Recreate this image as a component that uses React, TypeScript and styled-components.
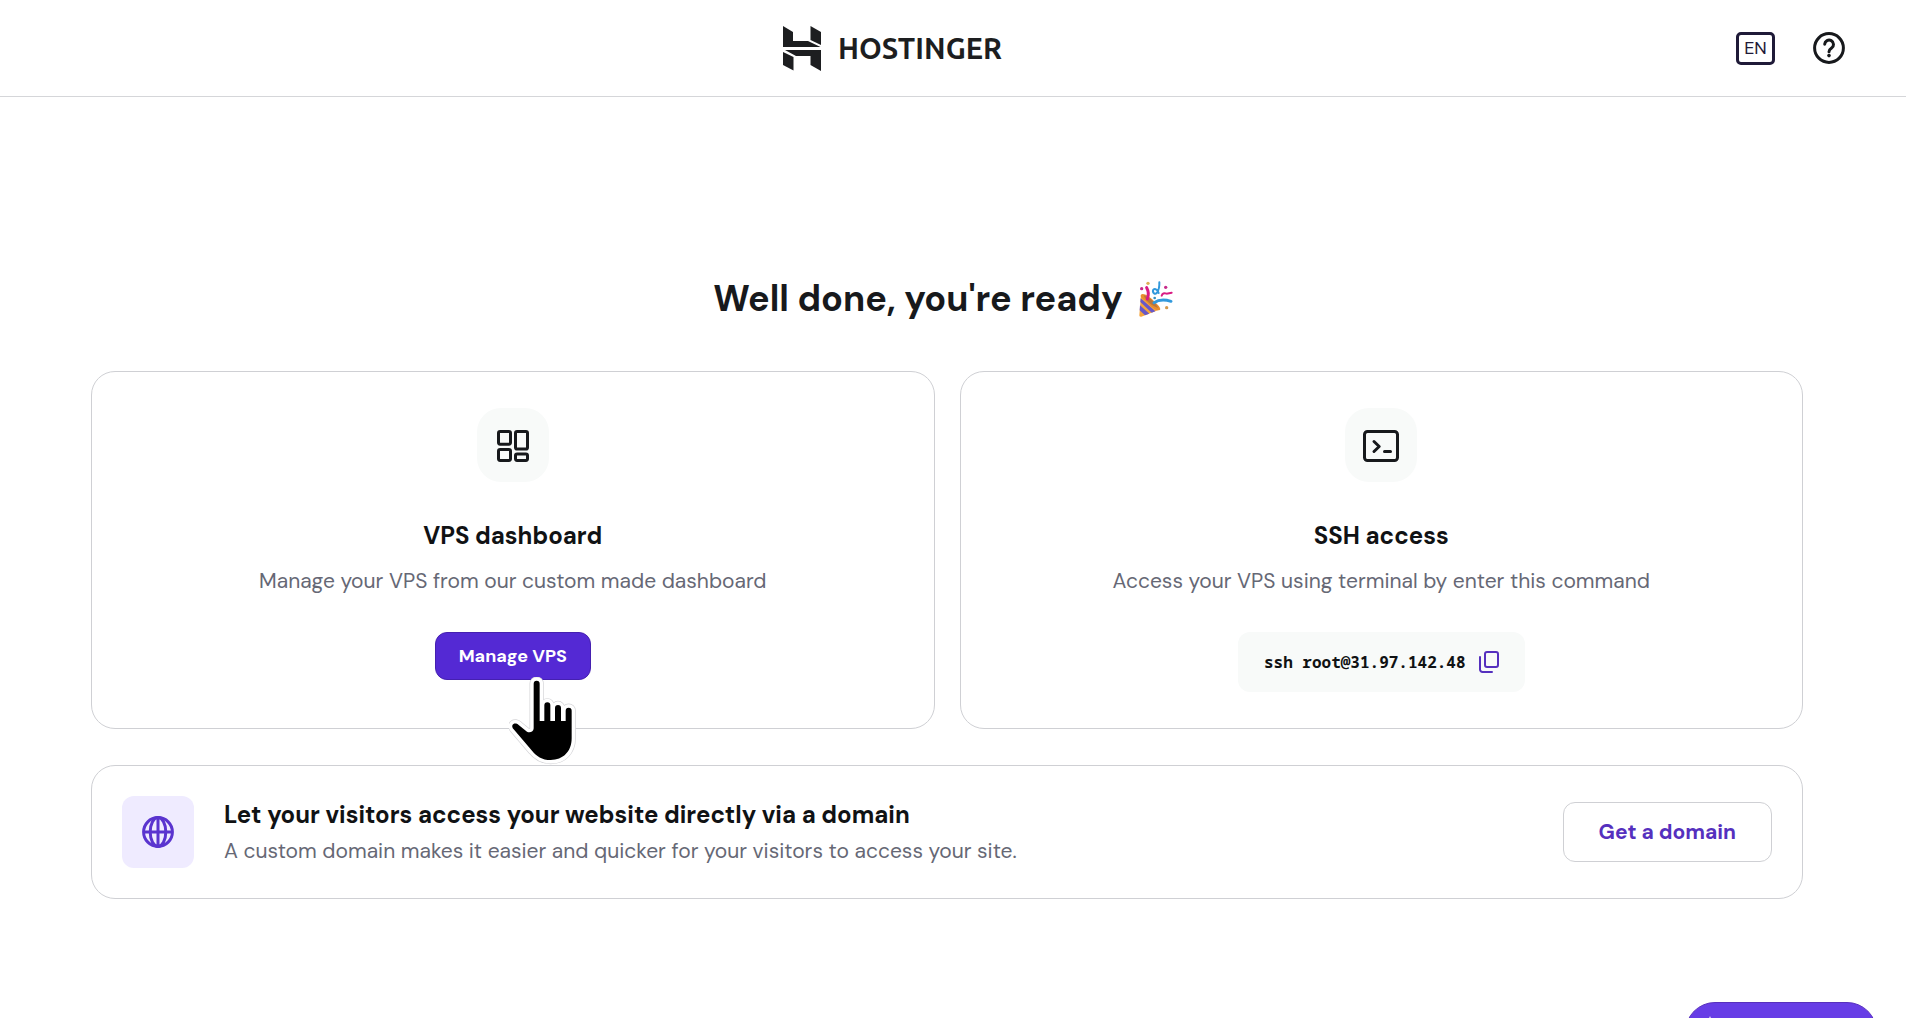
import React from "react";
import styled, { createGlobalStyle } from "styled-components";

const GlobalStyle = createGlobalStyle`
  *, *::before, *::after { box-sizing: border-box; }
  body {
    margin: 0;
    background: #ffffff;
    color: #17191c;
    font-family: "DM Sans", Inter, "Liberation Sans", sans-serif;
  }
  h1, h2, p { margin: 0; }
  button { font-family: inherit; cursor: pointer; }
  svg { display: block; flex: none; }
`;

const Header = styled.header`
  display: flex;
  align-items: center;
  justify-content: space-between;
  height: 97px;
  padding: 0 61px 0 48px;
  border-bottom: 1px solid #d5d6d9;
`;

const HeaderStart = styled.div`
  width: 0;
`;

const Brand = styled.a`
  display: flex;
  align-items: center;
  gap: 16px;
  color: #1d1e20;
  text-decoration: none;
`;

const Wordmark = styled.span`
  font-family: Ubuntu, "Noto Sans", sans-serif;
  font-size: 29px;
  line-height: 32px;
  font-weight: 700;
`;

const HeaderActions = styled.div`
  display: flex;
  align-items: center;
  gap: 38px;
`;

const LanguageButton = styled.button`
  width: 39px;
  height: 33px;
  padding: 0;
  border: 3px solid #1f1a38;
  border-radius: 5px;
  background: transparent;
  color: #1f1a38;
  font-size: 18px;
  line-height: 20px;
`;

const IconButton = styled.button`
  display: flex;
  padding: 0;
  border: 0;
  background: transparent;
  color: ${(p) => p.color || "#17191c"};
`;

const Main = styled.main`
  display: flex;
  flex-direction: column;
  gap: 36px;
  padding: 180px 103px 80px 91px;
`;

const Heading = styled.h1`
  display: flex;
  align-items: center;
  justify-content: center;
  gap: 16px;
  padding: 0 8px 14px 0;
  font-size: 36px;
  line-height: 44px;
  font-weight: 700;
`;

const Cards = styled.div`
  display: grid;
  grid-template-columns: 1fr 1fr;
  gap: 25px;
`;

const Card = styled.section`
  display: flex;
  flex-direction: column;
  align-items: center;
  padding: 36px 24px;
  border: 1px solid #cfd0d4;
  border-radius: 24px;
`;

const CardIcon = styled.div`
  display: grid;
  place-items: center;
  width: 72px;
  height: 74px;
  padding-top: 2px;
  margin-bottom: 38px;
  border-radius: 24px;
  background: #f8faf9;
`;

const Title = styled.h2`
  font-size: 24px;
  line-height: 32px;
  font-weight: 700;
  color: #101214;
`;

const Description = styled.p`
  font-size: 21px;
  line-height: 28px;
  color: #666875;
`;

const CardDescription = styled(Description)`
  margin: 15px 0 37px;
  text-align: center;
`;

const PrimaryWrap = styled.div`
  position: relative;
`;

const PrimaryButton = styled.button`
  height: 48px;
  padding: 0 23px;
  border: 1px solid #4520b0;
  border-radius: 12px;
  background: #5429d4;
  color: #ffffff;
  font-size: 18px;
  line-height: 24px;
  font-weight: 700;
`;

const Pointer = styled.svg`
  position: absolute;
  left: 74px;
  top: 45px;
  pointer-events: none;
`;

const Command = styled.div`
  display: flex;
  align-items: center;
  gap: 13px;
  height: 60px;
  padding: 0 26px;
  border-radius: 12px;
  background: #f8faf9;
`;

const Code = styled.code`
  font-family: "Noto Sans Mono", "DejaVu Sans Mono", monospace;
  font-size: 16px;
  line-height: 24px;
  font-weight: 700;
  color: #101214;
`;

const DomainCard = styled.section`
  display: flex;
  align-items: center;
  gap: 30px;
  padding: 30px;
  border: 1px solid #cfd0d4;
  border-radius: 24px;
`;

const DomainIcon = styled.div`
  display: grid;
  place-items: center;
  width: 72px;
  height: 72px;
  border-radius: 12px;
  background: #efebff;
`;

const DomainText = styled.div`
  flex: 1;
  display: flex;
  flex-direction: column;
  gap: 6px;
`;

const OutlineButton = styled.button`
  height: 60px;
  padding: 0 35px;
  border: 1px solid #cfd0d4;
  border-radius: 12px;
  background: #ffffff;
  color: #5530be;
  font-size: 21px;
  line-height: 28px;
  font-weight: 700;
`;

const AssistantButton = styled.button`
  position: fixed;
  right: 29px;
  bottom: -44px;
  display: flex;
  align-items: center;
  width: 192px;
  height: 60px;
  padding: 0 18px;
  border: 1px solid #5830bd;
  border-radius: 30px;
  background: #673de6;
  color: #ffffff;
`;

const LogoMark = () => (
  <svg width="40" height="46" viewBox="0 0 40 46" fill="#1d1e20" aria-hidden="true">
    <path d="M1 1 11 7V16H26L38.500 22H1Z" />
    <path d="M28.500 1 39 7V20L28.500 15Z" />
    <path d="M3 25H39V46L28.500 40V31H14Z" />
    <path d="M1 27 11.500 32V45.500L1 40Z" />
  </svg>
);

const HelpIcon = () => (
  <svg width="32" height="32" viewBox="0 0 32 32" fill="none" stroke="currentColor" strokeWidth="3" aria-hidden="true">
    <circle cx="16" cy="16" r="14.400" />
    <path d="M11.700 12.200a4.400 4.400 0 1 1 6.900 3.900C16.700 17.400 16 18 16 19.800" strokeLinecap="round" />
    <circle cx="16" cy="23.600" r="1.800" fill="currentColor" stroke="none" />
  </svg>
);

const PartyIcon = () => (
  <svg width="34" height="36" viewBox="0 0 102 106" fill="none" role="img" aria-label="Party popper">
    <path d="M1 102 6 40Q38 44 64 84L7 106Q0 107 1 102Z" fill="#f6a43b" />
    <path d="M3 72 31 97 18 102 2 87ZM5 51 49 90 38 94 4 62Z" fill="#6858c7" />
    <path d="M6 40C12 33 29 43 44 58C58 72 68 81 62 86C54 90 38 78 25 64C12 51 2 47 6 40Z" fill="#e98d2d" />
    <path d="M14 42C25 44 47 62 58 80C43 77 20 60 14 42Z" fill="#b8753c" />
    <path d="M25 53Q32 35 23 19" stroke="#d91b83" strokeWidth="9" strokeLinecap="round" />
    <path d="M45 64Q65 51 96 60" stroke="#3299dc" strokeWidth="9" strokeLinecap="round" />
    <path d="M61 3Q62 22 54 34C48 43 39 33 43 25C49 19 57 28 59 35" stroke="#3299dc" strokeWidth="6" strokeLinecap="round" />
    <path d="M68 43Q71 33 83 37L98 34" stroke="#d91b83" strokeWidth="6" strokeLinecap="round" />
    <circle cx="27" cy="6" r="5" fill="#dfaf56" />
    <circle cx="8" cy="22" r="5" fill="#c72a8b" />
    <circle cx="80" cy="18" r="5" fill="#c72a8b" />
    <circle cx="47" cy="50" r="4" fill="#368fbd" />
    <circle cx="83" cy="79" r="5" fill="#d5994c" />
  </svg>
);

const DashboardIcon = () => (
  <svg width="32" height="32" viewBox="0 0 32 32" fill="none" stroke="#17191c" strokeWidth="3" aria-hidden="true">
    <rect x="1.500" y="1.500" width="12" height="12.700" rx="1.600" />
    <rect x="18.500" y="1.500" width="12" height="17.500" rx="1.600" />
    <rect x="1.500" y="19.400" width="12" height="11" rx="1.600" />
    <rect x="18.500" y="24" width="12" height="6.400" rx="1.600" />
  </svg>
);

const TerminalIcon = () => (
  <svg width="36" height="32" viewBox="0 0 36 32" fill="none" stroke="#17191c" strokeWidth="3" strokeLinecap="round" strokeLinejoin="round" aria-hidden="true">
    <rect x="1.500" y="1.500" width="33" height="29" rx="3" />
    <path d="m11 11.500 5.200 5-5.200 5M21.500 21.500h6" />
  </svg>
);

const CopyIcon = () => (
  <svg width="20" height="22" viewBox="0 0 20 22" fill="none" stroke="currentColor" strokeWidth="2" strokeLinecap="round" aria-hidden="true">
    <rect x="6" y="1" width="13" height="15" rx="2" />
    <path d="M1 6V18.500a2.500 2.500 0 0 0 2.500 2.500H13" />
  </svg>
);

const GlobeIcon = () => (
  <svg width="32" height="32" viewBox="0 0 32 32" fill="none" stroke="#5a34cf" strokeWidth="3" aria-hidden="true">
    <circle cx="16" cy="16" r="14.400" />
    <ellipse cx="16" cy="16" rx="7.800" ry="14.400" />
    <path d="M16 1.600V30.400M1.600 16H30.400" />
  </svg>
);

const handPath =
  "M74 20a9 9 0 0 1 18 0V132H106V85a9 9 0 0 1 18 0V132H138V93a9 9 0 0 1 18 0V132H170V101a9 9 0 0 1 18 0V184C188 224 162 249 125 249C99 249 82 237 69 221L14 157C2 143 18 133 29 144L54 164C62 169 74 164 74 154Z";

const HandPointer = () => (
  <Pointer width="70" height="90" viewBox="0 0 210 270" aria-hidden="true">
    <path d={handPath} fill="#d5d5d8" stroke="#d5d5d8" strokeWidth="25" strokeLinejoin="round" />
    <path d={handPath} fill="#ffffff" stroke="#ffffff" strokeWidth="21" strokeLinejoin="round" />
    <path d={handPath} fill="#000000" />
  </Pointer>
);

const SparkIcon = () => (
  <svg width="24" height="32" viewBox="0 0 24 32" fill="currentColor" aria-hidden="true">
    <path d="M6 0 9 8 16 12 9 15 6 24 3 15 0 12 3 8Z" />
  </svg>
);

export default function App() {
  return (
    <>
      <GlobalStyle />
      <Header>
        <HeaderStart />
        <Brand href="#">
          <LogoMark />
          <Wordmark>HOSTINGER</Wordmark>
        </Brand>
        <HeaderActions>
          <LanguageButton type="button">EN</LanguageButton>
          <IconButton type="button" aria-label="Help">
            <HelpIcon />
          </IconButton>
        </HeaderActions>
      </Header>

      <Main>
        <Heading>
          Well done, you're ready
          <PartyIcon />
        </Heading>

        <Cards>
          <Card>
            <CardIcon>
              <DashboardIcon />
            </CardIcon>
            <Title>VPS dashboard</Title>
            <CardDescription>Manage your VPS from our custom made dashboard</CardDescription>
            <PrimaryWrap>
              <PrimaryButton type="button">Manage VPS</PrimaryButton>
              <HandPointer />
            </PrimaryWrap>
          </Card>

          <Card>
            <CardIcon>
              <TerminalIcon />
            </CardIcon>
            <Title>SSH access</Title>
            <CardDescription>Access your VPS using terminal by enter this command</CardDescription>
            <Command>
              <Code>ssh root@31.97.142.48</Code>
              <IconButton type="button" color="#5530be" aria-label="Copy command">
                <CopyIcon />
              </IconButton>
            </Command>
          </Card>
        </Cards>

        <DomainCard>
          <DomainIcon>
            <GlobeIcon />
          </DomainIcon>
          <DomainText>
            <Title>Let your visitors access your website directly via a domain</Title>
            <Description>A custom domain makes it easier and quicker for your visitors to access your site.</Description>
          </DomainText>
          <OutlineButton type="button">Get a domain</OutlineButton>
        </DomainCard>
      </Main>

      <AssistantButton type="button" aria-label="Open assistant">
        <SparkIcon />
      </AssistantButton>
    </>
  );
}
